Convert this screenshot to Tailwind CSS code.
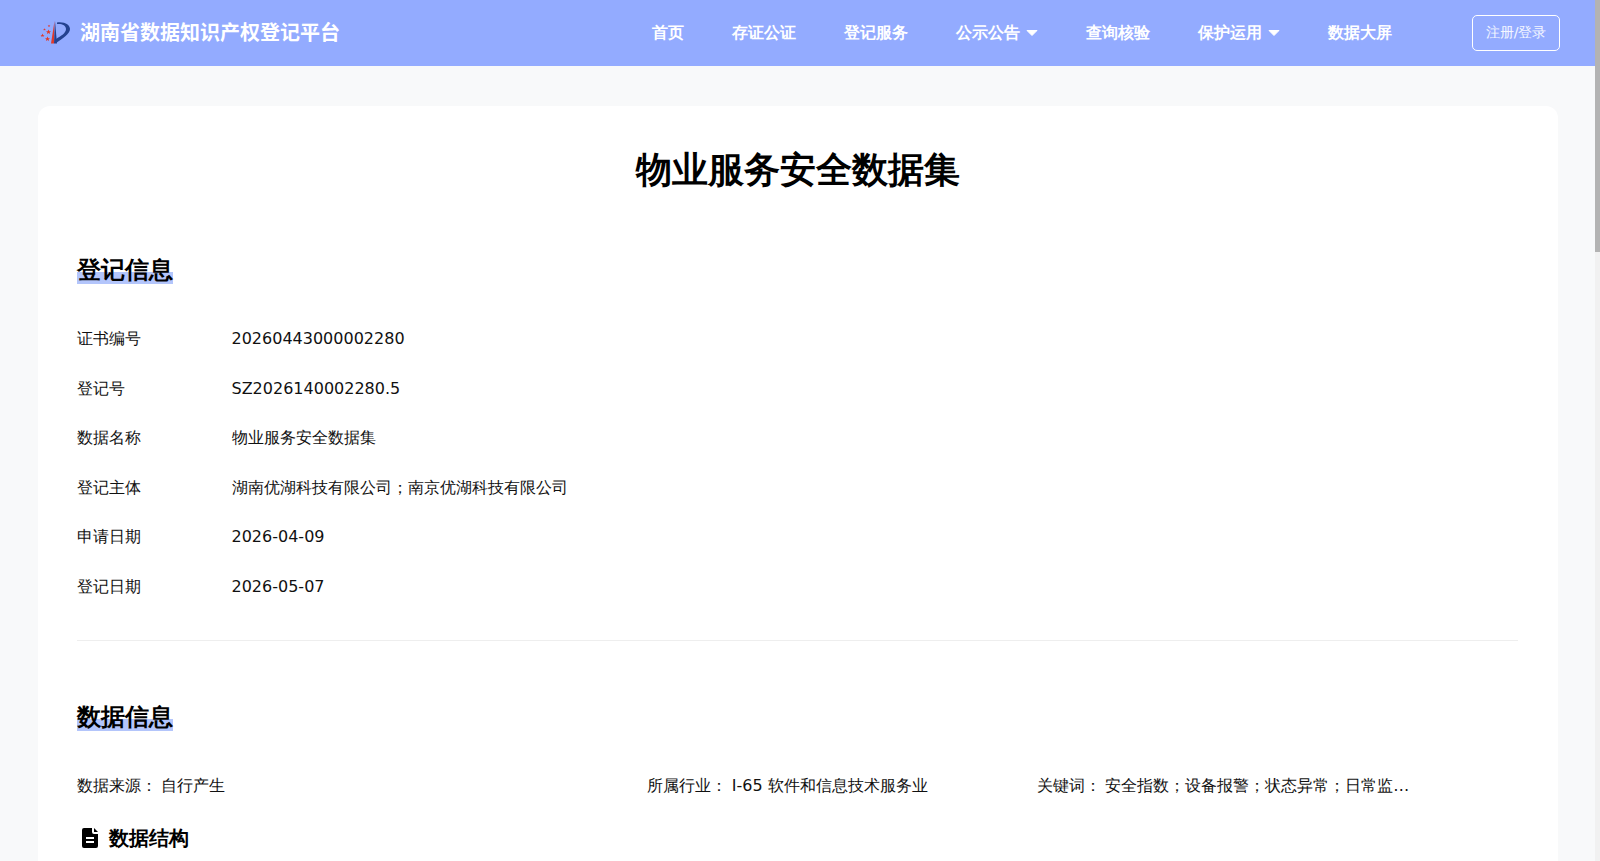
<!DOCTYPE html>
<html><head><meta charset="utf-8"><script src="https://cdn.jsdelivr.net/npm/@tailwindcss/browser@4"></script></head>
<body class="h-[861px] overflow-hidden bg-[#f8f9fa] font-['DejaVu_Sans',sans-serif] text-[#111]">
<div class="flex h-[861px]">
<div class="w-[1595px] shrink-0">
<header class="h-[66px] bg-[#93abff] flex items-center pl-[40px] pr-[40px] text-white">
  <div class="flex items-center gap-[8px]">
    <svg width="32" height="26" viewBox="0 0 32 26"><defs><path id="s" d="M0-1 .3-.3 1-.3 .45.1 .6.8 0 .4-.6.8-.45.1-1-.3-.3-.3Z" fill="#e0392b"/></defs><path d="M14.500 1 11 23.500 14 23.500Z" fill="#e0392b"/><path d="M15 1 14 23.500 17 23.500Z" fill="#24418f"/><path d="M17 2.500C25 1.500 30 5 30 9C30 14 23 18 16 23L16 19C21 16 26 13 26 9C26 5.500 22 3.500 17 4Z" fill="#24418f"/><use href="#s" transform="translate(8.500 12) scale(2.6)"/><use href="#s" transform="translate(7.500 19) scale(2.6)"/><use href="#s" transform="translate(2.500 15.500) scale(2)"/><use href="#s" transform="translate(4.500 9.500) scale(1.300)"/><use href="#s" transform="translate(9 6) scale(1.300)"/></svg>
    <span class="text-[20px] font-bold font-['DejaVu_Sans','Noto_Sans_CJK_SC',sans-serif]">湖南省数据知识产权登记平台</span>
  </div>
  <nav class="ml-auto flex items-center gap-[48px] text-[16px] font-bold mr-[80px]">
    <a>首页</a><a>存证公证</a><a>登记服务</a>
    <a class="flex items-center gap-[6px]">公示公告<svg width="12" height="6" viewBox="0 0 12 6"><path d="M1 .5h10L6 5.500z" fill="#fff" stroke="#fff" stroke-linejoin="round"/></svg></a>
    <a>查询核验</a>
    <a class="flex items-center gap-[6px]">保护运用<svg width="12" height="6" viewBox="0 0 12 6"><path d="M1 .5h10L6 5.500z" fill="#fff" stroke="#fff" stroke-linejoin="round"/></svg></a>
    <a>数据大屏</a>
  </nav>
  <button class="h-[36px] w-[88px] border border-white rounded-[5px] text-[14px] text-white/90 mr-[-5px] pb-[2px]">注册/登录</button>
</header>
<main class="mt-[40px] mx-[37.5px] bg-white rounded-t-[12px] pl-[39.75px] pr-[39.75px] pt-[40px] h-[755px] overflow-hidden">
  <h1 class="text-[36px] font-bold text-center leading-[48px] text-black">物业服务安全数据集</h1>
  <h2 class="mt-[60px] text-[24px] font-bold leading-[32px] text-black"><span class="bg-[linear-gradient(transparent_57%,#b3c5fb_57%)]">登记信息</span></h2>
  <dl class="mt-[41px] flex flex-col gap-[25.5px] text-[16px] leading-[24px]">
    <div class="flex"><dt class="w-[154.25px]">证书编号</dt><dd>20260443000002280</dd></div>
    <div class="flex"><dt class="w-[154.25px]">登记号</dt><dd>SZ2026140002280.5</dd></div>
    <div class="flex"><dt class="w-[154.25px]">数据名称</dt><dd>物业服务安全数据集</dd></div>
    <div class="flex"><dt class="w-[154.25px]">登记主体</dt><dd>湖南优湖科技有限公司；南京优湖科技有限公司</dd></div>
    <div class="flex"><dt class="w-[154.25px]">申请日期</dt><dd>2026-04-09</dd></div>
    <div class="flex"><dt class="w-[154.25px]">登记日期</dt><dd>2026-05-07</dd></div>
  </dl>
  <hr class="mt-[41px] border-[#eeeeee]">
  <h2 class="mt-[60px] text-[24px] font-bold leading-[32px] text-black"><span class="bg-[linear-gradient(transparent_57%,#b3c5fb_57%)]">数据信息</span></h2>
  <div class="mt-[41px] flex text-[16px] leading-[24px]">
    <div class="w-[570px]"><span class="mr-[4px]">数据来源：</span>自行产生</div>
    <div class="w-[390px]"><span class="mr-[4.5px]">所属行业：</span>I-65 软件和信息技术服务业</div>
    <div class="w-[376px] truncate"><span class="mr-[4px]">关键词：</span>安全指数；设备报警；状态异常；日常监测；数据分析</div>
  </div>
  <h3 class="mt-[26px] flex items-center gap-[11px] text-[20px] font-bold leading-[28px] text-black">
    <svg class="ml-[5px]" width="16" height="20" viewBox="0 0 16 20"><path fill-rule="evenodd" d="M2 0h8v4a2 2 0 0 0 2 2h4v12a2 2 0 0 1-2 2H2a2 2 0 0 1-2-2V2a2 2 0 0 1 2-2zM4 9v2h8V9zM4 13v2h8v-2z" fill="#000"/><path d="M12 0l4 4h-4z" fill="#000"/></svg>
    数据结构</h3>
</main>
</div>
<div class="w-[5px] h-[861px] bg-[#f1f1f1]"><div class="h-[252px] bg-[#b3b3b3]"></div></div>
</div>
</body></html>
